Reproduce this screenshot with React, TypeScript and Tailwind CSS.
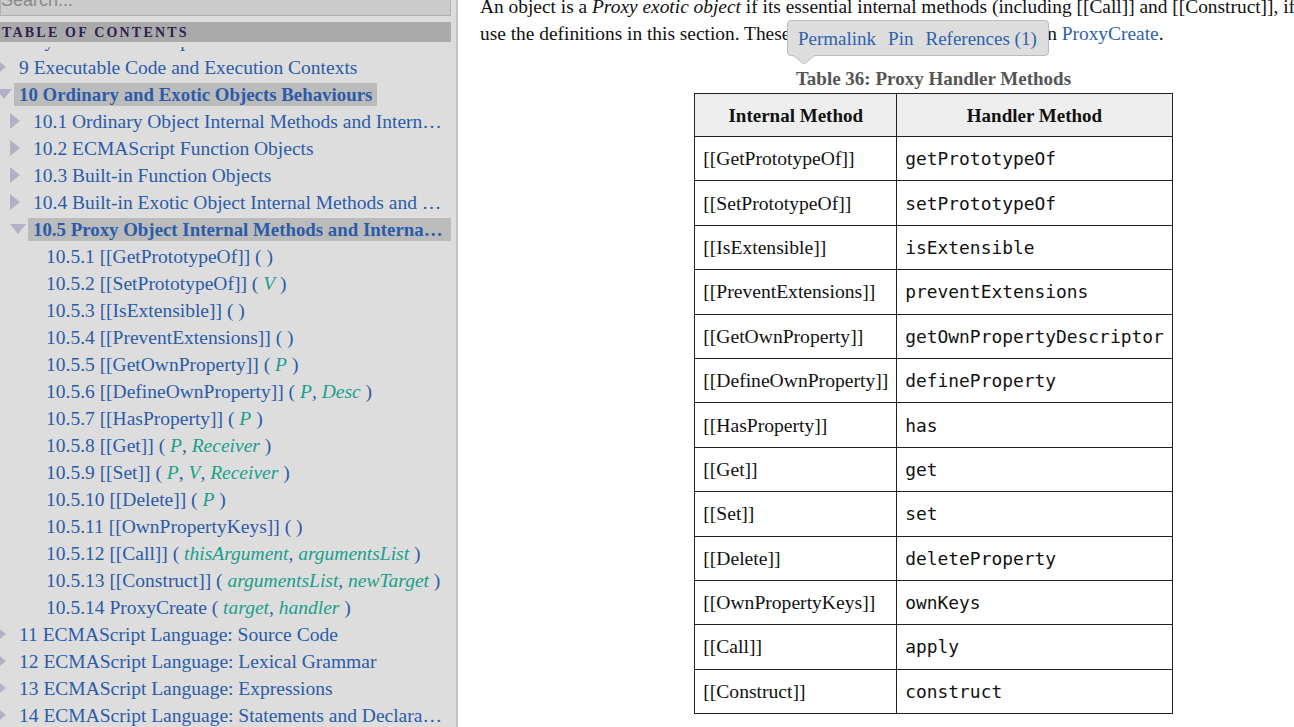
import React from 'react';

type TocItem = {
  level: 0 | 1 | 2;
  num: string;
  title: string;
  arrow?: 'right' | 'down';
  active?: boolean;
  args?: string[];
};

const toc: TocItem[] = [
  { level: 0, num: '8', title: 'Syntax-Directed Operations', arrow: 'right' },
  { level: 0, num: '9', title: 'Executable Code and Execution Contexts', arrow: 'right' },
  { level: 0, num: '10', title: 'Ordinary and Exotic Objects Behaviours', arrow: 'down', active: true },
  { level: 1, num: '10.1', title: 'Ordinary Object Internal Methods and Internal Slots', arrow: 'right' },
  { level: 1, num: '10.2', title: 'ECMAScript Function Objects', arrow: 'right' },
  { level: 1, num: '10.3', title: 'Built-in Function Objects', arrow: 'right' },
  { level: 1, num: '10.4', title: 'Built-in Exotic Object Internal Methods and Slots', arrow: 'right' },
  { level: 1, num: '10.5', title: 'Proxy Object Internal Methods and Internal Slots', arrow: 'down', active: true },
  { level: 2, num: '10.5.1', title: '[[GetPrototypeOf]]', args: [] },
  { level: 2, num: '10.5.2', title: '[[SetPrototypeOf]]', args: ['V'] },
  { level: 2, num: '10.5.3', title: '[[IsExtensible]]', args: [] },
  { level: 2, num: '10.5.4', title: '[[PreventExtensions]]', args: [] },
  { level: 2, num: '10.5.5', title: '[[GetOwnProperty]]', args: ['P'] },
  { level: 2, num: '10.5.6', title: '[[DefineOwnProperty]]', args: ['P', 'Desc'] },
  { level: 2, num: '10.5.7', title: '[[HasProperty]]', args: ['P'] },
  { level: 2, num: '10.5.8', title: '[[Get]]', args: ['P', 'Receiver'] },
  { level: 2, num: '10.5.9', title: '[[Set]]', args: ['P', 'V', 'Receiver'] },
  { level: 2, num: '10.5.10', title: '[[Delete]]', args: ['P'] },
  { level: 2, num: '10.5.11', title: '[[OwnPropertyKeys]]', args: [] },
  { level: 2, num: '10.5.12', title: '[[Call]]', args: ['thisArgument', 'argumentsList'] },
  { level: 2, num: '10.5.13', title: '[[Construct]]', args: ['argumentsList', 'newTarget'] },
  { level: 2, num: '10.5.14', title: 'ProxyCreate', args: ['target', 'handler'] },
  { level: 0, num: '11', title: 'ECMAScript Language: Source Code', arrow: 'right' },
  { level: 0, num: '12', title: 'ECMAScript Language: Lexical Grammar', arrow: 'right' },
  { level: 0, num: '13', title: 'ECMAScript Language: Expressions', arrow: 'right' },
  { level: 0, num: '14', title: 'ECMAScript Language: Statements and Declarations', arrow: 'right' },
  { level: 0, num: '15', title: 'ECMAScript Language: Functions and Classes', arrow: 'right' },
];

const handlerRows = [
  ['[[GetPrototypeOf]]', 'getPrototypeOf'],
  ['[[SetPrototypeOf]]', 'setPrototypeOf'],
  ['[[IsExtensible]]', 'isExtensible'],
  ['[[PreventExtensions]]', 'preventExtensions'],
  ['[[GetOwnProperty]]', 'getOwnPropertyDescriptor'],
  ['[[DefineOwnProperty]]', 'defineProperty'],
  ['[[HasProperty]]', 'has'],
  ['[[Get]]', 'get'],
  ['[[Set]]', 'set'],
  ['[[Delete]]', 'deleteProperty'],
  ['[[OwnPropertyKeys]]', 'ownKeys'],
  ['[[Call]]', 'apply'],
  ['[[Construct]]', 'construct'],
];

const Arrow: React.FC<{ dir?: 'right' | 'down' }> = ({ dir }) => {
  if (dir === 'right') {
    return (
      <svg width="10" height="16" viewBox="0 0 10 16" className="block">
        <polygon points="0,0 10,8 0,16" fill="#b4aec6" />
      </svg>
    );
  }
  if (dir === 'down') {
    return (
      <svg width="16" height="10" viewBox="0 0 16 10" className="block">
        <polygon points="0,0 16,0 8,10" fill="#b4aec6" />
      </svg>
    );
  }
  return null;
};

const TocRow: React.FC<{ item: TocItem }> = ({ item }) => {
  const indent = item.level === 0 ? 'pl-0' : item.level === 1 ? 'pl-[14px]' : 'pl-[27px]';
  return (
    <div className={`flex h-[27px] items-center ${indent}`}>
      <div className="flex w-[18px] shrink-0 items-center">
        <Arrow dir={item.arrow} />
      </div>
      <span
        className={`min-w-0 truncate px-[5px] leading-[23px] ${
          item.active ? 'bg-[#bbbbbb] text-[18.85px] font-bold' : ''
        }`}
      >
        {item.num} {item.title}
        {item.args && (
          <>
            {' ( '}
            {item.args.map((a, i) => (
              <React.Fragment key={a + i}>
                {i > 0 && ', '}
                <i className="text-[#1a9f8c]">{a}</i>
              </React.Fragment>
            ))}
            {item.args.length > 0 ? ' )' : ')'}
          </>
        )}
      </span>
    </div>
  );
};

export default function App() {
  return (
    <div className="flex h-[727px] w-[1294px] overflow-hidden bg-white font-['Liberation_Serif',serif]">
      {/* Sidebar */}
      <aside className="flex w-[458px] shrink-0 flex-col overflow-hidden border-r-2 border-[#c4c4c4] bg-[#dddddd] pr-[5px]">
        <div className="relative z-10 mt-[-15px] h-[31px] shrink-0 border border-[#b0b0b0] bg-[#cccccc] font-['Liberation_Sans',sans-serif] text-[18px] leading-[29px] text-[#8a8a8a]">
          Search...
        </div>
        <div className="relative z-10 mt-[6px] flex h-[20px] shrink-0 items-center bg-[#aaaaaa] pl-[2px] text-[14px] font-bold tracking-[2.2px] text-[#2e2150]">
          TABLE OF CONTENTS
        </div>
        <div className="relative mt-[5px] min-h-0 flex-1 overflow-hidden">
          <div className="ml-[-4px] mt-[-20.5px] text-[19.5px] text-[#2b5ba8]">
            {toc.map((item) => (
              <TocRow key={item.num} item={item} />
            ))}
          </div>
        </div>
      </aside>

      {/* Main content */}
      <main className="relative w-[929px] shrink-0 pl-[22px] text-[19.6px] leading-[27px] text-[#111]">
        <p className="mt-[-7px] whitespace-nowrap text-[19.4px]">
          An object is a <i>Proxy exotic object</i> if its essential internal methods (including [[Call]] and
          [[Construct]], if applicable)
          <br />
          use the definitions in this section. These{' '}
          <span className="tracking-[0.4px]">internal methods are installed i</span>n{' '}
          <span className="text-[#2f62ad]">ProxyCreate</span>.
        </p>

        <div className="mt-[18px] text-center text-[19px] font-bold text-[#555]">Table 36: Proxy Handler Methods</div>

        <table className="mx-auto mt-[1px] w-[477px] border-collapse">
          <thead>
            <tr className="h-[43px] bg-[#eeeeee]">
              <th className="w-[202px] border border-[#222] text-center text-[19px] font-bold">Internal Method</th>
              <th className="border border-[#222] text-center text-[19px] font-bold">Handler Method</th>
            </tr>
          </thead>
          <tbody>
            {handlerRows.map(([internal, handler]) => (
              <tr key={internal} className="h-[44.4px]">
                <td className="border border-[#222] px-[8px]">{internal}</td>
                <td className="border border-[#222] px-[8px] font-['DejaVu_Sans_Mono',monospace] text-[17.9px]">
                  {handler}
                </td>
              </tr>
            ))}
          </tbody>
        </table>

        {/* Permalink tooltip */}
        <div className="absolute left-[329px] top-[20px] flex h-[36px] items-center gap-[12px] rounded-[4px] border border-[#bbbbbb] bg-[#dddddd] pl-[10px] pr-[11px] text-[19px] text-[#2f62ad]">
          <span>Permalink</span>
          <span>Pin</span>
          <span>References (1)</span>
          <svg width="22" height="10" viewBox="0 0 22 10" className="absolute left-[5px] top-[34px]">
            <polygon points="0,0 22,0 11,9" fill="#dddddd" />
            <polyline points="0,0.5 11,9 22,0.5" fill="none" stroke="#bbbbbb" strokeWidth="1" />
          </svg>
        </div>
      </main>
    </div>
  );
}
